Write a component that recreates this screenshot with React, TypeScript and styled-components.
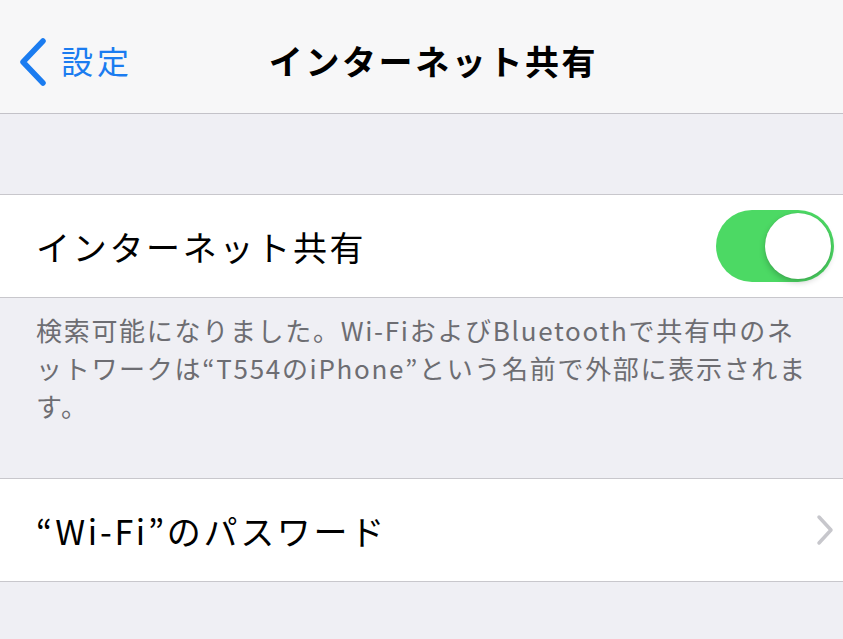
import React, { useState } from "react";
import styled, { createGlobalStyle } from "styled-components";

const GlobalStyle = createGlobalStyle`
  html, body {
    margin: 0;
    padding: 0;
    background: #efeff4;
  }
  body {
    font-family: "Noto Sans CJK JP", "Noto Sans", sans-serif;
    -webkit-font-smoothing: antialiased;
  }
`;

const App: React.FC = () => {
  const [sharing, setSharing] = useState(true);

  return (
    <Page>
      <GlobalStyle />
      <NavBar>
        <BackButton>
          <svg width="30" height="48" viewBox="0 0 30 48">
            <path
              d="M25 3 L5 24 L25 45"
              fill="none"
              stroke="#1b7cf0"
              strokeWidth="5.5"
              strokeLinecap="round"
              strokeLinejoin="round"
            />
          </svg>
          <BackLabel>設定</BackLabel>
        </BackButton>
        <NavTitle>インターネット共有</NavTitle>
      </NavBar>

      <GroupSpacer $height={80} />
      <Group>
        <Row>
          <RowLabel>インターネット共有</RowLabel>
          <Toggle $on={sharing} onClick={() => setSharing(!sharing)}>
            <Knob $on={sharing} />
          </Toggle>
        </Row>
      </Group>
      <Footer>
        検索可能になりました。Wi-FiおよびBluetoothで共有中のネットワークは“T554のiPhone”という名前で外部に表示されます。
      </Footer>

      <Group>
        <Row>
          <RowLabel>“Wi-Fi”のパスワード</RowLabel>
          <svg width="18" height="32" viewBox="0 0 18 32">
            <path
              d="M3 3 L15 16 L3 29"
              fill="none"
              stroke="#c7c7cc"
              strokeWidth="3.5"
              strokeLinecap="round"
              strokeLinejoin="round"
            />
          </svg>
        </Row>
      </Group>
    </Page>
  );
};

export default App;

const Page = styled.div`
  width: 843px;
  min-height: 639px;
  background: #efeff4;
  display: flex;
  flex-direction: column;
`;

const NavBar = styled.div`
  position: relative;
  height: 103px;
  padding-top: 10px;
  background: #f7f7f8;
  border-bottom: 1px solid #c3c2c8;
  display: flex;
  align-items: center;
  justify-content: center;
`;

const BackButton = styled.div`
  position: absolute;
  left: 18px;
  top: 10px;
  bottom: 0;
  display: flex;
  align-items: center;
  gap: 13px;
`;

const BackLabel = styled.span`
  font-size: 32px;
  color: #1b7cf0;
  letter-spacing: 4px;
  padding-bottom: 3px;
`;

const NavTitle = styled.span`
  font-size: 34px;
  font-weight: 700;
  color: #000;
  letter-spacing: 2.6px;
  margin-left: 24px;
  padding-bottom: 3px;
`;

const GroupSpacer = styled.div<{ $height: number }>`
  height: ${(p) => p.$height}px;
`;

const Group = styled.div`
  background: #fff;
  border-top: 1px solid #c8c7cc;
  border-bottom: 1px solid #c8c7cc;
`;

const Row = styled.div`
  height: 102px;
  display: flex;
  align-items: center;
  justify-content: space-between;
  padding: 0 9px 0 36px;
`;

const RowLabel = styled.span`
  font-size: 34px;
  letter-spacing: 2.7px;
  color: #000;
`;

const Toggle = styled.div<{ $on: boolean }>`
  position: relative;
  width: 118px;
  height: 72px;
  border-radius: 36px;
  background: ${(p) => (p.$on ? "#4cd964" : "#e5e5ea")};
  cursor: pointer;
`;

const Knob = styled.div<{ $on: boolean }>`
  position: absolute;
  top: 3px;
  left: ${(p) => (p.$on ? "49px" : "3px")};
  width: 66px;
  height: 66px;
  border-radius: 50%;
  background: #fff;
  box-shadow: 0 3px 6px rgba(0, 0, 0, 0.22), 0 0 1px rgba(0, 0, 0, 0.15);
`;

const Footer = styled.p`
  margin: 0;
  padding: 13px 28px 53px 36px;
  font-size: 26px;
  letter-spacing: 1.7px;
  line-height: 38px;
  color: #6d6d72;
`;
